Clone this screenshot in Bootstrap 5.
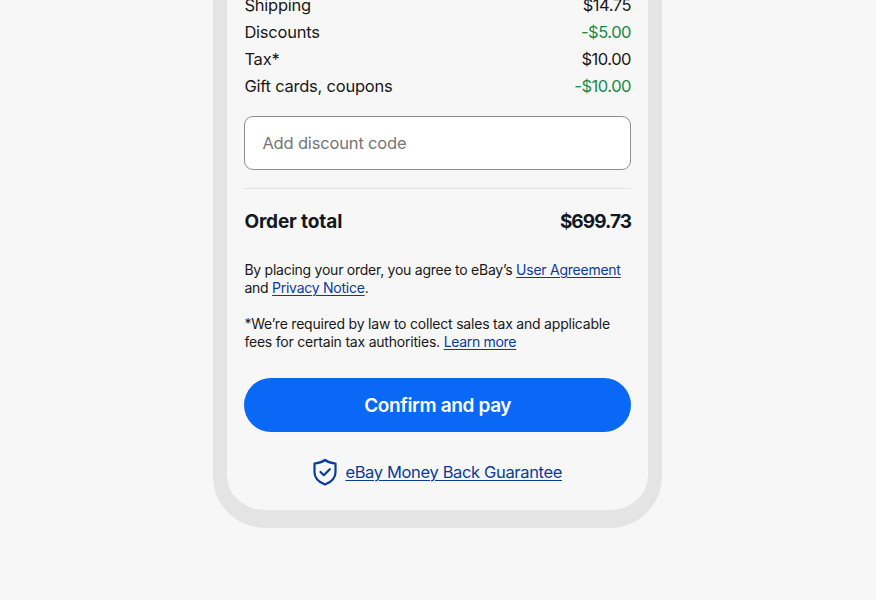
<!DOCTYPE html>
<html lang="en">
<head>
<meta charset="utf-8">
<meta name="viewport" content="width=device-width, initial-scale=1">
<title>Order summary</title>
<link href="https://cdn.jsdelivr.net/npm/bootstrap@5.3.0/dist/css/bootstrap.min.css" rel="stylesheet">
<style>
body{background:#f7f7f7;color:#191919;font-family:Inter,"Liberation Sans",sans-serif;height:600px;overflow:hidden}
.phone{width:449px;height:528px;margin-left:213px;border:solid #e4e4e4;border-width:0 14px 18px 14px;border-radius:0 0 52px 52px;padding:0 17px 0 17.4px;overflow:hidden}
.summary{margin-top:-8px;font-size:16.5px;line-height:27px;letter-spacing:-.23px}
.figure-amount{letter-spacing:-.48px}
.saving{color:#188a45}
.code-input,.code-input:focus{height:54px;margin-top:16px;border:1px solid #8f8f8f;border-radius:9px;padding:0 17px;font-size:16.5px;letter-spacing:-.17px;background:#fff;box-shadow:none}
.code-input::placeholder{color:#767676;opacity:1}
.rule{height:1px;margin-top:18px;background:#e2e2e2}
.total{margin-top:19px;line-height:28px;font-size:19px;font-weight:700;letter-spacing:-.12px;color:#111820}
.total .amount{letter-spacing:-.95px}
.legal{font-size:14px;line-height:18px;letter-spacing:-.25px;margin:0 0 18px;white-space:nowrap}
.legal-tax{letter-spacing:-.21px}
.legal-tax a{letter-spacing:-.31px}
.legal-first{margin-top:25px}
.phone a{color:#0a3b9c;text-decoration-thickness:1px;text-underline-offset:2px}
.pay,.pay:hover{height:54px;background:#0968f6;color:#fff;font-size:19px;font-weight:600;letter-spacing:-.35px;margin-top:9px;padding:2px 0 0;border:0}
.guarantee{margin-top:26px;gap:8px;height:28px;font-size:16.5px;letter-spacing:-.35px}
</style>
</head>
<body>
<main class="phone">
  <div class="summary">
    <div class="d-flex justify-content-between"><span>Shipping</span><span class="figure-amount">$14.75</span></div>
    <div class="d-flex justify-content-between"><span>Discounts</span><span class="figure-amount saving">-$5.00</span></div>
    <div class="d-flex justify-content-between"><span>Tax*</span><span class="figure-amount">$10.00</span></div>
    <div class="d-flex justify-content-between"><span>Gift cards, coupons</span><span class="figure-amount saving">-$10.00</span></div>
  </div>
  <input class="form-control code-input" type="text" placeholder="Add discount code" aria-label="Add discount code">
  <div class="rule"></div>
  <div class="total d-flex justify-content-between"><span>Order total</span><span class="amount">$699.73</span></div>
  <p class="legal legal-first">By placing your order, you agree to eBay’s <a href="#">User Agreement</a><br>and <a href="#">Privacy Notice</a>.</p>
  <p class="legal legal-tax">*We’re required by law to collect sales tax and applicable<br>fees for certain tax authorities. <a href="#">Learn more</a></p>
  <button class="btn pay rounded-pill w-100" type="button">Confirm and pay</button>
  <div class="guarantee d-flex justify-content-center align-items-center">
    <svg width="24" height="28" viewBox="0 0 24 28" fill="none" stroke="#0a3b9c" stroke-width="2.200" stroke-linejoin="round" aria-hidden="true"><path d="M12 2C9.200 4.100 5.500 5.300 1.500 5.500v8.700c0 5.600 4.200 9.800 10.500 12.300 6.300-2.500 10.500-6.700 10.500-12.300V5.500C18.500 5.300 14.800 4.100 12 2Z"/><path d="m7.500 14 3.300 3.200L16.800 11.200" stroke-linecap="round"/></svg>
    <a href="#">eBay Money Back Guarantee</a>
  </div>
</main>
<script src="https://cdn.jsdelivr.net/npm/bootstrap@5.3.0/dist/js/bootstrap.bundle.min.js"></script>
</body>
</html>
